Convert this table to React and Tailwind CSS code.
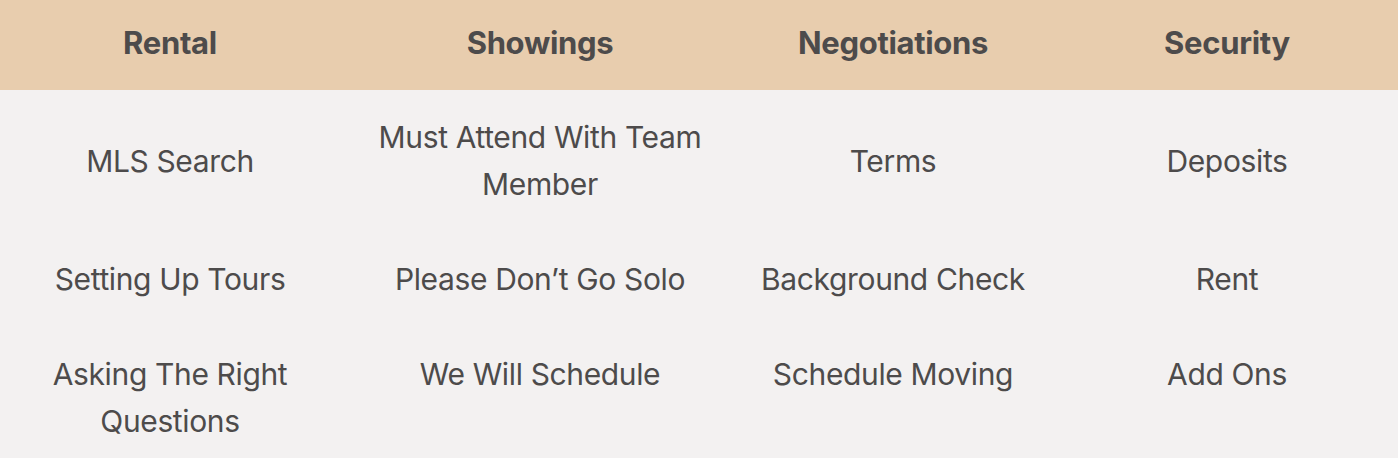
import React from 'react'

const headers = ['Rental', 'Showings', 'Negotiations', 'Security']

const rows = [
  { align: 'items-center', cells: ['MLS Search', 'Must Attend With Team Member', 'Terms', 'Deposits'] },
  { align: 'items-center', cells: ['Setting Up Tours', 'Please Don\u2019t Go Solo', 'Background Check', 'Rent'] },
  { align: 'items-start', cells: ['Asking The Right Questions', 'We Will Schedule', 'Schedule Moving', 'Add Ons'] },
]

const cols = 'grid grid-cols-[340px_400px_306px_1fr]'

export default function App() {
  return (
    <div className="w-[1398px] h-[458px] overflow-hidden bg-[#f3f1f1] text-[#4d4b4b]" style={{ fontFamily: 'Inter, "Noto Sans", sans-serif' }}>
      <div className={`${cols} h-[90px] bg-[#e8cdae]`}>
        {headers.map((h, j) => (
          <div key={h} className={`flex items-center justify-center pb-1 text-[31px] font-bold tracking-[-0.01em] ${j === 3 ? 'pl-[10px]' : ''}`}>{h}</div>
        ))}
      </div>
      {rows.map((r, i) => (
        <div key={i} className={`${cols} ${r.align}`}>
          {r.cells.map((c, j) => (
            <div key={j} className={`py-6 text-center text-[30px] leading-[47px] tracking-[-0.012em] ${j === 3 ? 'pl-[18px] pr-2' : 'px-8'} ${j === 2 ? '!px-1' : ''}`}>{c}</div>
          ))}
        </div>
      ))}
    </div>
  )
}
